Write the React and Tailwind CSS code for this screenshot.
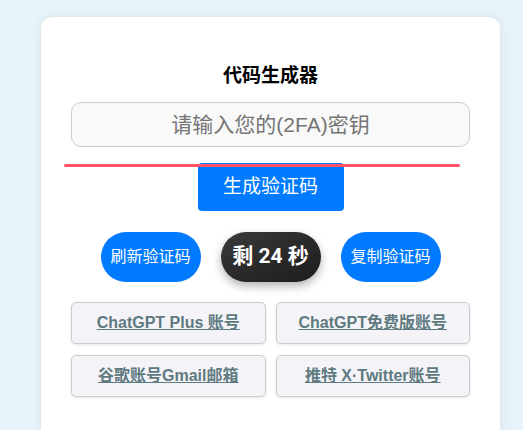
const links = [
  "ChatGPT Plus 账号",
  "ChatGPT免费版账号",
  "谷歌账号Gmail邮箱",
  "推特 X·Twitter账号",
];

export default function App() {
  return (
    <div className="h-[430px] overflow-hidden bg-[#e8f3f9] pt-[17px] pl-[41px] pr-[23px] font-['Liberation_Sans','Noto_Sans_CJK_SC',sans-serif]">
      <div className="h-[440px] rounded-[12px] bg-white shadow-[0_0_10px_rgba(0,0,0,0.08)] px-[30px] pt-[46px]">
        <h1 className="text-center text-[19px] font-bold leading-[26px] text-black">
          代码生成器
        </h1>
        <input
          type="text"
          placeholder="请输入您的(2FA)密钥"
          className="mt-[13px] block h-[45px] w-full rounded-[10px] border border-[#cccccc] bg-[#f9f9f9] text-center text-[21px] text-[#333] placeholder:text-[#757575] focus:outline-none"
        />
        <div className="relative mt-[16px] flex justify-center">
          <button className="h-[48px] w-[146px] rounded-[4px] bg-[#007bff] text-[19px] text-white">
            生成验证码
          </button>
          <div className="absolute left-[-7px] top-[1px] h-[3px] w-[396px] rounded-full bg-[#ff5266]" />
        </div>
        <div className="mt-[21px] flex justify-center gap-[20px]">
          <button className="h-[50px] w-[100px] rounded-full bg-[#007bff] text-[16px] text-white">
            刷新验证码
          </button>
          <div className="flex h-[50px] w-[100px] items-center justify-center rounded-full bg-gradient-to-br from-[#3a3a3a] to-[#1c1c1c] text-[21px] font-bold text-white shadow-[0_4px_10px_rgba(0,0,0,0.3)] font-['Roboto','Noto_Sans_CJK_SC',sans-serif]">
            剩 24 秒
          </div>
          <button className="h-[50px] w-[100px] rounded-full bg-[#007bff] text-[16px] text-white">
            复制验证码
          </button>
        </div>
        <div className="mt-[20px] grid grid-cols-2 gap-x-[10px] gap-y-[11px]">
          {links.map((t) => (
            <a
              key={t}
              href="#"
              className="flex h-[42px] items-center justify-center rounded-[5px] border border-[#cccccc] bg-[#f4f4f8] text-[16px] font-bold text-[#5f7a80] underline shadow-[0_1px_3px_rgba(0,0,0,0.1)]"
            >
              {t}
            </a>
          ))}
        </div>
      </div>
    </div>
  );
}
